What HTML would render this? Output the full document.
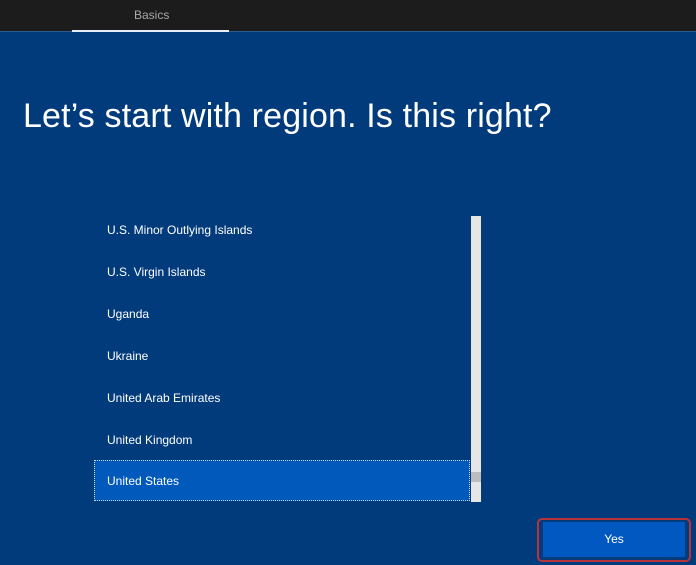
<!DOCTYPE html>
<html><head><style>
body{margin:0;width:696px;height:565px;overflow:hidden;background:#023b7c;font-family:"Liberation Sans",sans-serif;position:relative}
.top{position:absolute;left:0;top:0;width:696px;height:31px;background:#1c1c1c}
.top span{position:absolute;left:134px;top:8px;font-size:12px;color:#a8a8a8}
.ul{position:absolute;left:72px;top:30px;width:157px;height:2px;background:#e8eef8}
.line{position:absolute;left:0;top:31px;width:696px;height:1px;background:#2b5a8f}
h1{position:absolute;left:23px;top:97px;margin:0;font-weight:normal;font-size:34px;color:#fff;letter-spacing:0.15px}
.it{position:absolute;left:107px;font-size:12px;color:#fff}
.sel{position:absolute;left:94px;top:460px;width:376px;height:41px;background:#0059bb;border:1px dotted #c8d8f0;box-sizing:border-box}
.sb{position:absolute;left:471px;top:216px;width:10px;height:286px;background:#e6e6e6}
.thumb{position:absolute;left:471px;top:472px;width:10px;height:10px;background:#bdbdbd}
.btnr{position:absolute;left:537px;top:518px;width:154px;height:44px;border:2px solid #b8323c;border-radius:5px;box-sizing:border-box}
.btn{position:absolute;left:543px;top:522px;width:142px;height:35px;background:#0058c0;color:#fff;font-size:12px;text-align:center;line-height:35px}
</style></head><body>
<div class="top"><span>Basics</span></div>
<div class="line"></div>
<div class="ul"></div>
<h1>Let’s start with region. Is this right?</h1>
<div class="sel"></div>
<div class="it" style="top:223px">U.S. Minor Outlying Islands</div>
<div class="it" style="top:265px">U.S. Virgin Islands</div>
<div class="it" style="top:307px">Uganda</div>
<div class="it" style="top:349px">Ukraine</div>
<div class="it" style="top:391px">United Arab Emirates</div>
<div class="it" style="top:433px">United Kingdom</div>
<div class="it" style="top:474px">United States</div>
<div class="sb"></div>
<div class="thumb"></div>
<div class="btnr"></div>
<div class="btn">Yes</div>
</body></html>
